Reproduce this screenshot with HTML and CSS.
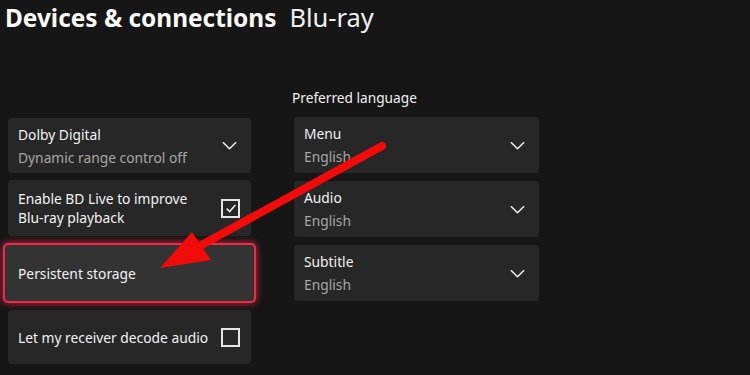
FILE: index.html
```html
<!DOCTYPE html>
<html lang="en">
<head>
    <meta charset="UTF-8">
    <title>Devices &amp; connections - Blu-ray</title>
    <link rel="stylesheet" href="styles.css">
</head>
<body>

<header class="page-title">
    <h1>Devices &amp; connections</h1>
    <span class="sub-title">Blu-ray</span>
</header>

<main class="settings">

    <section class="column left">
        <div class="card">
            <div class="text">
                <div class="label">Dolby Digital</div>
                <div class="value">Dynamic range control off</div>
            </div>
            <svg class="chevron" viewBox="0 0 16 9"><path d="M1 1 L8 8 L15 1"/></svg>
        </div>
        <div class="card tall">
            <div class="text">
                <div class="label wrap">Enable BD Live to improve Blu-ray playback</div>
            </div>
            <span class="checkbox">
                <svg viewBox="0 0 16 16"><path d="M3 8.5 L6.5 12 L13 4.5"/></svg>
            </span>
        </div>
        <div class="card focused">
            <div class="text">
                <div class="label">Persistent storage</div>
            </div>
        </div>
        <div class="card short">
            <div class="text">
                <div class="label">Let my receiver decode audio</div>
            </div>
            <span class="checkbox"></span>
        </div>
    </section>

    <section class="column right">
        <div class="group-label">Preferred language</div>
        <div class="card">
            <div class="text">
                <div class="label">Menu</div>
                <div class="value">English</div>
            </div>
            <svg class="chevron" viewBox="0 0 16 9"><path d="M1 1 L8 8 L15 1"/></svg>
        </div>
        <div class="card">
            <div class="text">
                <div class="label">Audio</div>
                <div class="value">English</div>
            </div>
            <svg class="chevron" viewBox="0 0 16 9"><path d="M1 1 L8 8 L15 1"/></svg>
        </div>
        <div class="card">
            <div class="text">
                <div class="label">Subtitle</div>
                <div class="value">English</div>
            </div>
            <svg class="chevron" viewBox="0 0 16 9"><path d="M1 1 L8 8 L15 1"/></svg>
        </div>
    </section>

</main>

<!-- the red annotation arrow drawn over the screen -->
<svg class="annotation" viewBox="0 0 750 375">
    <line x1="382" y1="146" x2="196" y2="248" />
    <polygon points="160,268 192,232 211,260" />
</svg>

</body>
</html>
```

FILE: styles.css
```css
:root {
    font-family: "Noto Sans", "Open Sans", sans-serif;
}
body {
    margin:     0;
    width:      750px;
    height:     375px;
    overflow:   hidden;
    background: #161616;
    color:      #f0f0f0;
    position:   relative;
}

.page-title {
    display:    flex;
    align-items: baseline;
    gap:        13px;
    padding:    0 5px;
    height:     44px;
}
.page-title h1 {
    margin:     0;
    font-size:  24.4px;
    font-weight: 700;
    line-height: 34px;
    color:      #fafafa;
}
.page-title .sub-title {
    font-size:  25.5px;
    font-weight: 400;
    color:      #f0f0f0;
}

.settings {
    display:    flex;
    gap:        43px;
    padding-left: 8px;
}
.column {
    display:    flex;
    flex-direction: column;
}
.column.left {
    width:      243px;
    gap:        7px;
    padding-top: 74px;
}
.column.right {
    width:      245px;
    gap:        8px;
}
.group-label {
    font-size:  13.7px;
    line-height: 20px;
    margin:     44px 0 1px -2px;
}

.card {
    display:    flex;
    align-items: center;
    justify-content: space-between;
    height:     55px;
    box-sizing: border-box;
    padding:    6px 12px 6px 10px;
    background: #272727;
    border-radius: 3px;
}
.column.right .card {
    height:     56px;
}
.card.tall {
    height:     56px;
}
.card.short {
    height:     54px;
}
.card .text {
    display:    flex;
    flex-direction: column;
    gap:        2px;
}
.card .label {
    font-size:  13.8px;
    line-height: 21px;
    color:      #f2f2f2;
}
.card .label.wrap {
    width:      190px;
    line-height: 19px;
}
.card .value {
    font-size:  13.8px;
    line-height: 21px;
    color:      #a6a6a6;
}

.card.focused { /* the highlighted tile */
    height:     60px;
    margin:     0 -5px;
    padding-left: 13px;
    background: #333333;
    border:     2px solid #ee2a44;
    border-radius: 5px;
    box-shadow: 0 0 6px 1px rgba(240, 40, 70, 0.7);
}

.chevron {
    width:      15px;
    height:     9px;
    fill:       none;
    stroke:     #f0f0f0;
    stroke-width: 1.6;
    margin-right: 2px;
}
.checkbox {
    width:      19px;
    height:     19px;
    box-sizing: border-box;
    border:     2px solid #e6e6e6;
    display:    flex;
    align-items: center;
    justify-content: center;
    margin-right: -1px;
}
.checkbox svg {
    width:      14px;
    height:     14px;
    fill:       none;
    stroke:     #f0f0f0;
    stroke-width: 1.8;
}

.annotation {
    position:   absolute;
    inset:      0;
    width:      750px;
    height:     375px;
    pointer-events: none;
}
.annotation line {
    stroke:     #f20b0b;
    stroke-width: 8;
    stroke-linecap: round;
}
.annotation polygon {
    fill:       #f20b0b;
}
```
